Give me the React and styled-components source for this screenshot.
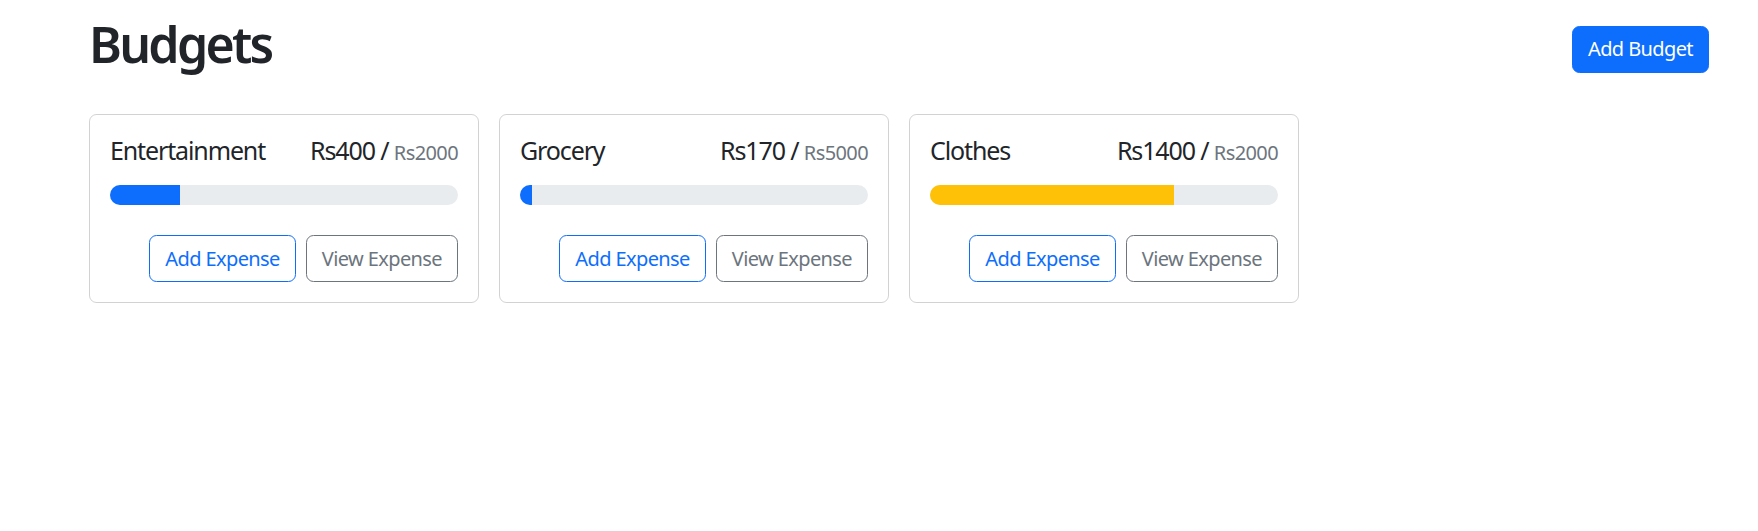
import React from "react";
import styled, { createGlobalStyle } from "styled-components";

const GlobalStyle = createGlobalStyle`
  body {
    margin: 0;
    background: #fff;
    color: #212529;
    font-family: "Noto Sans", "Open Sans", sans-serif;
    font-size: 20px;
    line-height: 1.5;
  }
`;

const budgets = [
  { id: 1, name: "Entertainment", amount: 400, max: 2000 },
  { id: 2, name: "Grocery", amount: 170, max: 5000 },
  { id: 3, name: "Clothes", amount: 1400, max: 2000 },
];

const barColor = (amount, max) => {
  const ratio = amount / max;
  if (ratio < 0.5) return "#0d6efd";
  if (ratio < 0.75) return "#ffc107";
  return "#dc3545";
};

export default function App() {
  return (
    <>
      <GlobalStyle />
      <Page>
        <Header>
          <Title>Budgets</Title>
          <PrimaryButton>Add Budget</PrimaryButton>
        </Header>
        <CardGrid>
          {budgets.map((b) => (
            <Card key={b.id}>
              <CardTitle>
                <span>{b.name}</span>
                <Amount>
                  Rs{b.amount} / <Max>Rs{b.max}</Max>
                </Amount>
              </CardTitle>
              <Progress>
                <ProgressFill
                  $color={barColor(b.amount, b.max)}
                  style={{ width: `${(b.amount / b.max) * 100}%` }}
                />
              </Progress>
              <Actions>
                <OutlineButton $variant="primary">Add Expense</OutlineButton>
                <OutlineButton $variant="secondary">View Expense</OutlineButton>
              </Actions>
            </Card>
          ))}
        </CardGrid>
      </Page>
    </>
  );
}

const Page = styled.div`
  padding: 14px 49px 30px 89px;
`;

const Header = styled.div`
  display: flex;
  align-items: center;
  gap: 10px;
  margin-bottom: 30px;
`;

const Title = styled.h1`
  margin: 0 auto 10px 0;
  font-size: 50px;
  font-weight: 600;
  line-height: 1.2;
  letter-spacing: -0.055em;
`;

const PrimaryButton = styled.button`
  font-family: inherit;
  font-size: 20px;
  line-height: 1.5;
  letter-spacing: -0.03em;
  padding: 7.5px 15px;
  color: #fff;
  background: #0d6efd;
  border: 1px solid #0d6efd;
  border-radius: 7.5px;
  cursor: pointer;
`;

const CardGrid = styled.div`
  display: grid;
  grid-template-columns: repeat(auto-fill, minmax(375px, 1fr));
  gap: 20px;
  align-items: flex-start;
`;

const Card = styled.div`
  border: 1px solid rgba(0, 0, 0, 0.175);
  border-radius: 7.5px;
  padding: 20px;
`;

const CardTitle = styled.div`
  display: flex;
  justify-content: space-between;
  align-items: baseline;
  font-size: 25px;
  line-height: 1.2;
  letter-spacing: -0.045em;
  margin-bottom: 20px;
`;

const Amount = styled.span`
  white-space: pre;
`;

const Max = styled.span`
  font-size: 20px;
  letter-spacing: -0.03em;
  color: #6c757d;
`;

const Progress = styled.div`
  height: 20px;
  border-radius: 50rem;
  background: #e9ecef;
  overflow: hidden;
  display: flex;
`;

const ProgressFill = styled.div`
  height: 100%;
  background: ${(p) => p.$color};
`;

const Actions = styled.div`
  display: flex;
  justify-content: flex-end;
  gap: 10px;
  margin-top: 30px;
`;

const OutlineButton = styled.button`
  font-family: inherit;
  font-size: 20px;
  line-height: 1.5;
  letter-spacing: -0.03em;
  padding: 7.5px 15px;
  background: #fff;
  border-radius: 7.5px;
  cursor: pointer;
  color: ${(p) => (p.$variant === "primary" ? "#0d6efd" : "#6c757d")};
  border: 1px solid ${(p) => (p.$variant === "primary" ? "#0d6efd" : "#6c757d")};
`;
